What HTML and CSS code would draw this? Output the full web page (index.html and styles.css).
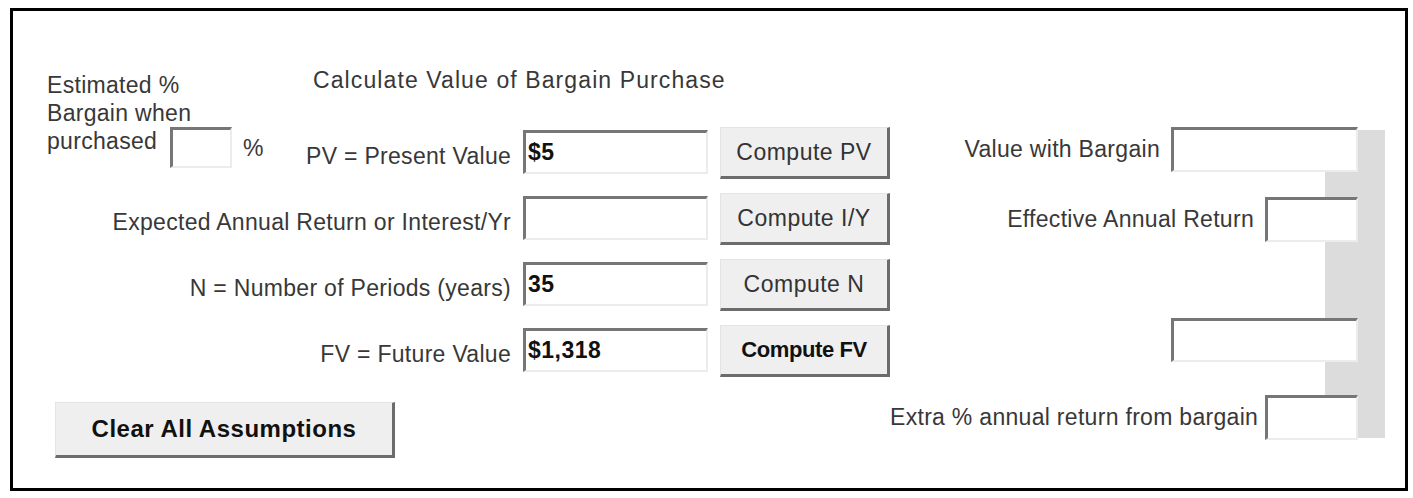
FILE: index.html
```html
<!DOCTYPE html>
<html lang="en">
<head>
  <meta charset="UTF-8">
  <title>Bargain Purchase Calculator</title>
  <link rel="stylesheet" href="styles.css">
</head>
<body>
  <div class="frame">
    <div class="calc">
      <!-- Bargain estimate -->
      <div class="intro">
        <div>Estimated %</div>
        <div>Bargain when</div>
        <div class="intro-row">
          <span>purchased</span>
          <input class="field small" type="text">
          <span class="pct">%</span>
        </div>
      </div>
      <div class="title">Calculate Value of Bargain Purchase</div>

      <label class="label">PV = Present Value</label>
      <input class="field" type="text" value="$5">
      <button class="btn">Compute PV</button>

      <label class="label wide">Expected Annual Return or Interest/Yr</label>
      <input class="field" type="text">
      <button class="btn">Compute I/Y</button>

      <label class="label wide">N = Number of Periods (years)</label>
      <input class="field" type="text" value="35">
      <button class="btn">Compute N</button>

      <label class="label wide">FV = Future Value</label>
      <input class="field" type="text" value="$1,318">
      <button class="btn bold">Compute FV</button>

      <button class="btn clear">Clear All Assumptions</button>
    </div>

    <!-- Results -->
    <div class="results">
      <div class="shade"></div>
      <label class="rlabel r1">Value with Bargain</label>
      <input class="field rwide r1" type="text">
      <label class="rlabel wide r3">Effective Annual Return</label>
      <input class="field rnarrow r3" type="text">
      <input class="field rwide r5" type="text">
      <label class="rlabel wide r7">Extra % annual return from bargain</label>
      <input class="field rnarrow r7" type="text">
    </div>
  </div>
</body>
</html>
```

FILE: styles.css
```css
/* General */
body {
  margin: 0;
  padding: 8px 0 0 10px;
  background: #fff;
  font-family: "Liberation Sans", Arial, sans-serif;
  font-size: 23px;
  letter-spacing: 0.3px;
  color: #383838;
}

.frame {
  box-sizing: border-box;
  width: 1398px;
  height: 483px;
  border: 3px solid #000;
  padding: 55px 0 0 34px;
  display: flex;
  align-items: flex-start;
}

/* Left calculator */
.calc {
  display: grid;
  grid-template-columns: 247px 205px 185px 170px;
  grid-template-rows: 47px 52px 52px 52px 52px auto;
  column-gap: 12px;
  row-gap: 14px;
}

.intro {
  grid-column: 1;
  grid-row: 1 / 3;
  padding-top: 5px;
  line-height: 28px;
}

.intro-row {
  display: flex;
  align-items: flex-start;
}

.field.small {
  width: 62px;
  height: 41px;
  margin: 0 0 0 13px;
}

.pct {
  margin: 7px 0 0 11px;
}

.title {
  grid-column: 2 / 5;
  grid-row: 1;
  margin-left: 7px;
  line-height: 28px;
  letter-spacing: 1.1px;
}

.label {
  grid-column: 2;
  align-self: center;
  margin-top: 6px;
  text-align: right;
  white-space: nowrap;
}

.label.wide {
  grid-column: 1 / 3;
}

.field {
  grid-column: 3;
  align-self: start;
  box-sizing: border-box;
  width: 100%;
  height: 44px;
  margin-top: 3px;
  padding: 0 0 0 2px;
  background: #fff;
  border-style: solid;
  border-width: 3px 2px 2px 3px;
  border-color: #767676 #ececec #ececec #767676;
  font-family: inherit;
  font-size: 23px;
  font-weight: bold;
  letter-spacing: 0.5px;
  color: #111;
  outline: none;
}

.btn {
  grid-column: 4;
  align-self: start;
  height: 52px;
  background: #efefef;
  border-style: solid;
  border-width: 1px 3px 3px 1px;
  border-color: #e4e4e4 #6c6c6c #6c6c6c #e4e4e4;
  font-family: inherit;
  font-size: 23px;
  letter-spacing: 0.5px;
  color: #333;
  padding: 0;
}

.btn.bold {
  font-weight: bold;
  font-size: 22px;
  letter-spacing: -0.4px;
  color: #111;
}

.btn.clear {
  grid-column: 1 / 3;
  justify-self: start;
  width: 340px;
  height: 56px;
  margin: 11px 0 0 8px;
  font-size: 24px;
  font-weight: bold;
  color: #111;
}

/* Right results */
.results {
  margin-top: 61px;
  width: 495px;
  display: grid;
  grid-template-columns: 1fr 94px 60px 33px 27px;
  grid-template-rows: 45px 25px 45px 76px 44px 33px 45px;
}

.shade {
  grid-column: 4 / 6;
  grid-row: 1 / 8;
  margin: 3px 0 2px;
  background: #dcdcdc;
}

.rlabel {
  grid-column: 1;
  align-self: center;
  padding-right: 11px;
  text-align: right;
  white-space: nowrap;
}

.rlabel.wide {
  grid-column: 1 / 3;
}

.results .field {
  margin-top: 0;
  height: 100%;
}

.rwide { grid-column: 2 / 5; }
.rnarrow { grid-column: 3 / 5; }
.r1 { grid-row: 1; }
.r3 { grid-row: 3; }
.r5 { grid-row: 5; }
.r7 { grid-row: 7; }
```
